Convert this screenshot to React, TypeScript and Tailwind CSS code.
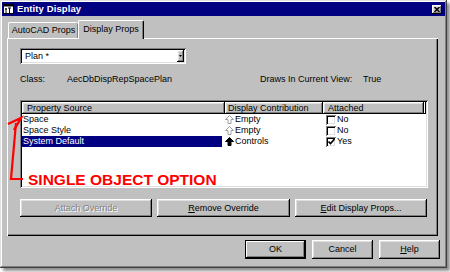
import React from 'react';

const raised = 'shadow-[inset_-1px_-1px_#000,inset_1px_1px_#fff,inset_-2px_-2px_#808080,inset_2px_2px_#dfdfdf]';
const sunken = 'shadow-[inset_1px_1px_#808080,inset_-1px_-1px_#fff,inset_2px_2px_#000,inset_-2px_-2px_#dfdfdf]';

const UpArrow: React.FC<{ solid?: boolean }> = ({ solid }) => (
    <svg width="9" height="9" viewBox="0 0 9 9" className="mr-[1px] shrink-0">
        <path
            d="M4.5 0.5 L8.5 4.5 L6 4.5 L6 8.5 L3 8.5 L3 4.5 L0.5 4.5 Z"
            fill={solid ? '#000' : '#fff'}
            stroke={solid ? '#000' : '#a0a0a0'}
            strokeWidth="1"
        />
    </svg>
);

const Checkbox: React.FC<{ checked?: boolean }> = ({ checked }) => (
    <span className={`w-[10px] h-[10px] bg-white ${sunken} mr-[1px] shrink-0 flex items-center justify-center`}>
        {checked && (
            <svg width="7" height="7" viewBox="0 0 7 7">
                <path d="M0.5 3.5 L2.5 5.5 L6.5 1" fill="none" stroke="#000" strokeWidth="1.6" />
            </svg>
        )}
    </span>
);

const rows = [
    { source: 'Space', contrib: 'Empty', solid: false, attached: 'No', checked: false, selected: false },
    { source: 'Space Style', contrib: 'Empty', solid: false, attached: 'No', checked: false, selected: false },
    { source: 'System Default', contrib: 'Controls', solid: true, attached: 'Yes', checked: true, selected: true },
];

const Button: React.FC<{ className?: string; children: React.ReactNode; disabled?: boolean }> = ({ className, children, disabled }) => (
    <div
        className={`flex items-center justify-center bg-[#c0c0c0] ${raised} ${className ?? ''} ${
            disabled ? 'text-[#808080] [text-shadow:1px_1px_#fff]' : 'text-black'
        }`}
    >
        {children}
    </div>
);

export default function App() {
    return (
        <div className="relative w-[450px] h-[272px] bg-white font-['Liberation_Sans',Arial,sans-serif] text-[9px] leading-none text-black overflow-hidden">
            <div className="w-[447px] h-[268px] bg-[#c0c0c0] p-[2px] flex flex-col shadow-[inset_-1px_-1px_#404040,inset_1px_1px_#dfdfdf,inset_-2px_-2px_#808080,inset_2px_2px_#fff,3px_3px_3px_rgba(0,0,0,0.45)]">
                {/* title bar */}
                <div className="h-[14px] bg-[#000080] flex items-center pl-[1px] pr-[3px]">
                    <svg width="11" height="11" viewBox="0 0 11 11" className="mr-[3px]">
                        <rect x="0.5" y="0.5" width="10" height="9" fill="#fff" stroke="#000" />
                        <rect x="0.5" y="0.5" width="10" height="2" fill="#000" />
                        <path d="M3 4 L3 9 M5 4 L8 4 M6.5 4 L6.5 9 M2 5 L4 5" stroke="#000" strokeWidth="1" />
                    </svg>
                    <span className="text-white font-bold text-[9.5px] tracking-[0.1px]">Entity Display</span>
                    <div className={`ml-auto w-[10px] h-[9px] bg-[#c0c0c0] ${raised} flex items-center justify-center`}>
                        <svg width="6" height="5" viewBox="0 0 6 5">
                            <path d="M0.5 0 L5.5 5 M5.5 0 L0.5 5" stroke="#000" strokeWidth="1.4" />
                        </svg>
                    </div>
                </div>

                <div className="px-[5px] pt-[4px] flex flex-col">
                    {/* tabs */}
                    <div className="h-[18px] flex items-end">
                        <div className="ml-[1px] w-[70px] h-[16px] border-t border-l border-white shadow-[inset_-1px_0_#808080,-0px_0_#000] rounded-t-[2px] flex items-center justify-center pb-[1px]">
                            AutoCAD Props
                        </div>
                        <div className="relative z-10 w-[66px] h-[19px] -mb-[1px] bg-[#c0c0c0] border-t border-l border-white border-r border-r-[#000] shadow-[inset_-1px_0_#808080] rounded-t-[2px] flex items-center justify-center pb-[2px]">
                            Display Props
                        </div>
                    </div>

                    {/* panel */}
                    <div className="w-[431px] h-[198px] shadow-[inset_1px_1px_#fff,inset_-1px_-1px_#000,inset_-2px_-2px_#808080] pt-[10px] pl-[13px] flex flex-col">
                        {/* dropdown */}
                        <div className={`w-[166px] h-[16px] bg-white ${sunken} flex items-center pl-[5px] pr-[2px]`}>
                            <span>Plan *</span>
                            <div className={`ml-auto w-[7px] h-[12px] bg-[#c0c0c0] ${raised} flex items-center justify-center`}>
                                <svg width="3" height="2" viewBox="0 0 3 2">
                                    <path d="M0 0 L3 0 L1.5 2 Z" fill="#000" />
                                </svg>
                            </div>
                        </div>

                        {/* class row */}
                        <div className="mt-[10px] h-[10px] flex items-center">
                            <span className="w-[47px]">Class:</span>
                            <span className="w-[193px]">AecDbDispRepSpacePlan</span>
                            <span className="w-[103px]">Draws In Current View:</span>
                            <span>True</span>
                        </div>

                        {/* list */}
                        <div className={`mt-[16px] w-[408px] h-[88px] bg-white ${sunken} p-[2px] flex flex-col`}>
                            <div className="h-[12px] flex bg-[#c0c0c0]">
                                <div className={`w-[203px] ${raised} pl-[5px] flex items-center`}>Property Source</div>
                                <div className={`w-[98px] ${raised} pl-[3px] flex items-center`}>Display Contribution</div>
                                <div className={`w-[101px] ${raised} pl-[5px] flex items-center`}>Attached</div>
                                <div className={`flex-1 ${raised}`} />
                            </div>
                            {rows.map((r) => (
                                <div key={r.source} className="h-[11px] flex items-center mt-[0px] first-of-type:mt-[1px]">
                                    <div
                                        className={`w-[200px] h-full pl-[1px] flex items-center ${
                                            r.selected ? 'bg-[#000080] text-white' : ''
                                        }`}
                                    >
                                        {r.source}
                                    </div>
                                    <div className="w-[101px] pl-[3px] flex items-center">
                                        <UpArrow solid={r.solid} />
                                        {r.contrib}
                                    </div>
                                    <div className="pl-[3px] flex items-center">
                                        <Checkbox checked={r.checked} />
                                        {r.attached}
                                    </div>
                                </div>
                            ))}
                        </div>

                        {/* override buttons */}
                        <div className="mt-[11px] flex gap-[5px]">
                            <Button className="w-[132px] h-[18px]" disabled>
                                Attach Override
                            </Button>
                            <Button className="w-[133px] h-[18px]">
                                <u>R</u>emove Override
                            </Button>
                            <Button className="w-[132px] h-[18px]">
                                <u>E</u>dit Display Props...
                            </Button>
                        </div>
                    </div>

                    {/* dialog buttons */}
                    <div className="mt-[4px] flex justify-end gap-[6px]">
                        <div className="w-[61px] h-[19px] bg-[#c0c0c0] shadow-[inset_-1px_-1px_#000,inset_1px_1px_#000,inset_-2px_-2px_#000,inset_2px_2px_#fff,inset_-3px_-3px_#808080] flex items-center justify-center">
                            OK
                        </div>
                        <Button className="w-[61px] h-[19px]">Cancel</Button>
                        <Button className="w-[61px] h-[19px]">
                            <u>H</u>elp
                        </Button>
                    </div>
                </div>
            </div>

            {/* red annotation over the list */}
            <svg className="absolute left-0 top-0 pointer-events-none" width="450" height="272" viewBox="0 0 450 272">
                <path d="M23 179 L11 179 L16 123" fill="none" stroke="#ff0000" strokeWidth="2.2" />
                <path d="M8 124 L21 118 L14 130" fill="none" stroke="#ff0000" strokeWidth="2.4" />
            </svg>
            <span className="absolute left-[28px] top-[172px] text-[15.5px] leading-none font-bold text-[#ff0000]">
                SINGLE OBJECT OPTION
            </span>
        </div>
    );
}
